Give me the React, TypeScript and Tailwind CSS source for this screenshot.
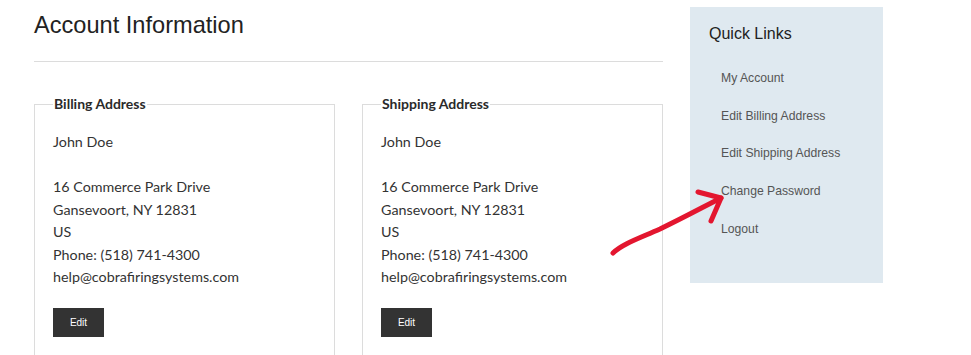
import React from 'react';

const address = {
  name: 'John Doe',
  lines: ['16 Commerce Park Drive', 'Gansevoort, NY 12831', 'US', 'Phone: (518) 741-4300', 'help@cobrafiringsystems.com'],
};

function AddressBox({ title }: { title: string }) {
  return (
    <fieldset className="w-[301px] border border-[#dcdcdc] px-[18px] pb-6 h-[262px]">
      <legend className="px-px text-[14px] font-bold text-[#2a2a2a] leading-[18px] font-['Lato',sans-serif]">
        {title}
      </legend>
      <div className="text-[14.3px] leading-[22.5px] text-[#333] font-['Lato',sans-serif] mt-[18px]">
        <p>{address.name}</p>
        <p className="mt-[22.5px]">
          {address.lines.map((l) => (
            <span key={l} className="block">{l}</span>
          ))}
        </p>
      </div>
      <button className="mt-[19px] w-[51px] h-[29px] bg-[#333] text-white text-[10px] font-['Liberation_Sans',Arial,sans-serif]">
        Edit
      </button>
    </fieldset>
  );
}

export default function App() {
  const links = ['My Account', 'Edit Billing Address', 'Edit Shipping Address', 'Change Password', 'Logout'];
  return (
    <div className="relative w-[971px] h-[355px] overflow-hidden bg-white flex pl-[34px]">
      <div className="w-[629px]">
        <h1 className="mt-[11px] text-[23.6px] leading-[28px] text-[#222] font-['Liberation_Sans',Arial,sans-serif]">
          Account Information
        </h1>
        <div className="mt-[22px] h-px bg-[#dcdcdc]" />
        <div className="mt-[33px] flex gap-[27px]">
          <AddressBox title="Billing Address" />
          <AddressBox title="Shipping Address" />
        </div>
      </div>

      <aside className="ml-[27px] mt-[7px] w-[193px] h-[276px] bg-[#dfe9f0] pl-[19px] pt-[17px]">
        <h2 className="text-[16px] leading-[20px] text-[#222] font-['Liberation_Sans',Arial,sans-serif]">Quick Links</h2>
        <ul className="mt-[26px] pl-[12px] font-['Liberation_Sans',Arial,sans-serif] text-[12.2px] text-[#555]">
          {links.map((l) => (
            <li key={l} className="h-[37.7px] leading-[14px] pt-[1px]">
              {l}
            </li>
          ))}
        </ul>
      </aside>

      {/* hand-drawn annotation arrow */}
      <svg className="absolute left-0 top-0 pointer-events-none" width="971" height="355" viewBox="0 0 971 355">
        <g stroke="#e3162f" strokeWidth="5" fill="none" strokeLinecap="round" strokeLinejoin="round">
          <path d="M613 253 C 622 244, 640 238, 660 229 C 685 217, 705 206, 721 198" />
          <path d="M698 192 L 721 198 L 711 221" />
        </g>
      </svg>
    </div>
  );
}
